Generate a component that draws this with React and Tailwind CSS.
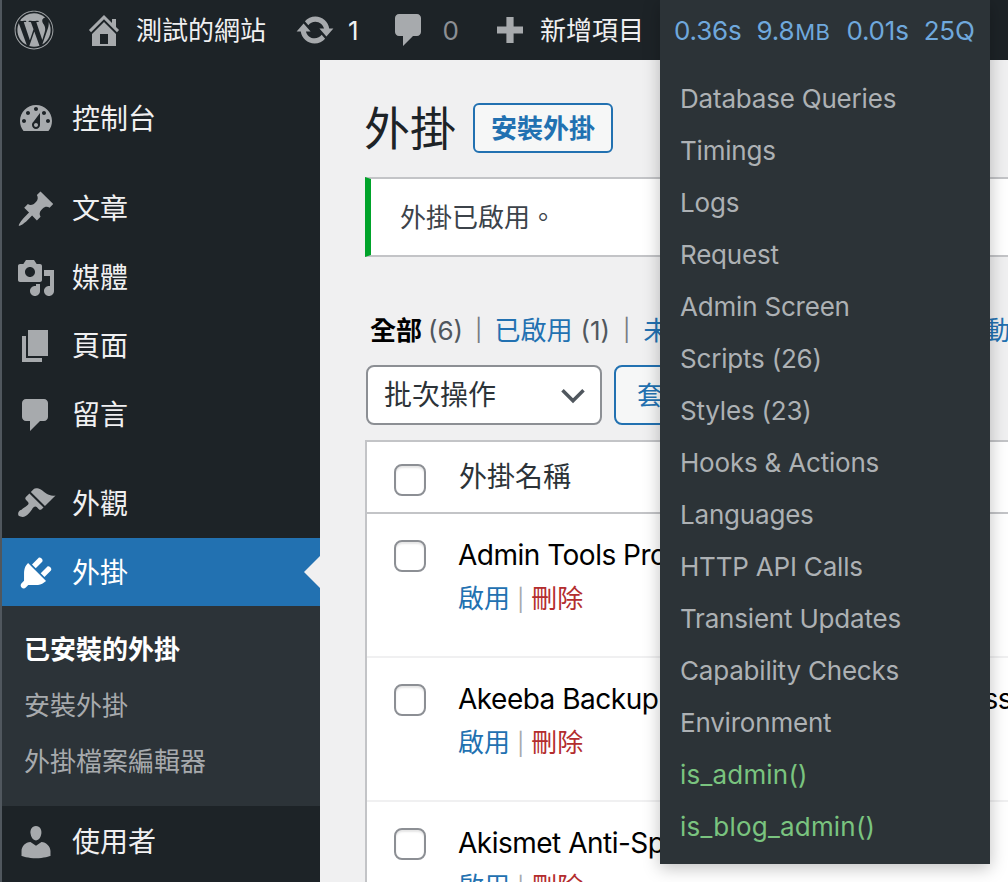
import { FaWordpress } from "react-icons/fa";

const SANS = "font-['Inter','Noto_Sans_CJK_TC',sans-serif]";

const ICONS = {
  dashboard:
    "M3.76 16h12.48c1.1-1.37 1.76-3.11 1.76-5 0-4.42-3.58-8-8-8s-8 3.58-8 8c0 1.89.66 3.63 1.76 5zM10 4c.55 0 1 .45 1 1s-.45 1-1 1-1-.45-1-1 .45-1 1-1zM6 6c.55 0 1 .45 1 1s-.45 1-1 1-1-.45-1-1 .45-1 1-1zm8 0c.55 0 1 .45 1 1s-.45 1-1 1-1-.45-1-1 .45-1 1-1zm-5.37 5.55L12 7v6c0 1.1-.9 2-2 2s-2-.9-2-2c0-.57.24-1.08.63-1.45zM4 10c.55 0 1 .45 1 1s-.45 1-1 1-1-.45-1-1 .45-1 1-1zm12 0c.55 0 1 .45 1 1s-.45 1-1 1-1-.45-1-1 .45-1 1-1zm-5 3c0-.55-.45-1-1-1s-1 .45-1 1 .45 1 1 1 1-.45 1-1z",
  post: "M10.44 3.02l1.82-1.82 6.36 6.35-1.83 1.82c-1.05-.68-2.48-.57-3.41.36l-.75.75c-.92.93-1.04 2.35-.35 3.41l-1.83 1.82-2.41-2.41-2.8 2.79c-.42.42-3.38 2.71-3.8 2.29s1.86-3.39 2.28-3.81l2.79-2.79L4.1 9.36l1.83-1.82c1.05.69 2.48.57 3.4-.36l.75-.75c.93-.92 1.05-2.35.36-3.41z",
  media:
    "M13 11V4c0-.55-.45-1-1-1h-1.67L9 1H5L3.67 3H2c-.55 0-1 .45-1 1v7c0 .55.45 1 1 1h10c.55 0 1-.45 1-1zM7 4.5c1.38 0 2.5 1.12 2.5 2.5S8.38 9.5 7 9.5 4.5 8.38 4.5 7 5.62 4.5 7 4.5zM14 6h5v10.5c0 1.38-1.12 2.5-2.5 2.5S14 17.88 14 16.5s1.12-2.5 2.5-2.5c.17 0 .34.02.5.05V9h-3V6zm-4 8.05V13h2v3.5c0 1.38-1.12 2.5-2.5 2.5S7 17.88 7 16.5 8.12 14 9.5 14c.17 0 .34.02.5.05z",
  page: "M6 15V2h10v13H6zm-1 1h8v2H3V5h2v11z",
  comment:
    "M5 2h9c1.1 0 2 .9 2 2v7c0 1.1-.9 2-2 2h-2l-5 5v-5H5c-1.1 0-2-.9-2-2V4c0-1.1.9-2 2-2z",
  appearance:
    "M14.48 11.06L7.41 3.99l1.5-1.5c.5-.56 2.3-.47 3.51.32 1.21.8 1.43 1.28 2.91 2.1 1.18.64 2.45 1.26 4.45.85zm-.71.71L6.7 4.7 4.93 6.47c-.39.39-.39 1.02 0 1.41l1.06 1.06c.39.39.39 1.03 0 1.42-.6.6-1.43 1.11-2.21 1.69-.35.26-.7.53-1.01.84C1.43 13.23.76 14.56 1.2 15.6c.05.1.12.18.18.26.06.06.11.1.18.15.21.16.52.19.69.26 1.44.61 2.77-.13 4.12-1.52.31-.3.6-.65.86-1 .6-.8 1.1-1.61 1.71-2.21.39-.4 1.03-.4 1.42-.01l1.05 1.05c.39.4 1.02.4 1.41.01z",
  plugins:
    "M13.11 4.36L9.87 7.6 8 5.73l3.24-3.24c.35-.34 1.05-.2 1.56.32.52.51.66 1.21.31 1.55zm-8 1.77l.91-1.12 9.01 9.01-1.19.84c-.71.71-2.63 1.16-3.82 1.16H6.14L4.9 17.26c-.59.59-1.54.59-2.12 0-.59-.58-.59-1.53 0-2.12l1.24-1.24v-3.88c0-1.13.4-3.19 1.09-3.89zm7.26 3.97l3.24-3.24c.34-.35 1.04-.21 1.55.31.52.51.66 1.21.31 1.55l-3.24 3.25z",
  users:
    "M10 9.25c-2.27 0-2.73-3.44-2.73-3.44C7 4.02 7.82 2 9.97 2c2.16 0 2.98 2.02 2.71 3.81 0 0-.41 3.44-2.68 3.44zm0 2.57L12.72 10c2.39 0 4.52 2.33 4.52 4.53v2.49s-3.65 1.13-7.24 1.13c-3.65 0-7.24-1.13-7.24-1.13v-2.49c0-2.25 1.94-4.48 4.47-4.48z",
  home: "M16 8.5l1.53 1.53-1.06 1.06L10 4.62l-6.47 6.47-1.06-1.06L10 2.5l4 4v-2h2v4zm-6-2.46l6 5.99V18H4v-5.97zM12 17v-5H8v5h4z",
  update:
    "M10.2 3.28c3.53 0 6.43 2.61 6.92 6h2.08l-3.5 4-3.5-4h2.32c-.45-1.97-2.21-3.45-4.32-3.45-1.45 0-2.73.71-3.54 1.78L4.95 5.66C6.23 4.2 8.11 3.28 10.2 3.28zm-.4 13.44c-3.52 0-6.43-2.61-6.92-6H.8l3.5-4c1.17 1.33 2.33 2.67 3.5 4H5.48c.45 1.97 2.21 3.45 4.32 3.45 1.45 0 2.73-.71 3.54-1.78l1.71 1.95c-1.28 1.46-3.15 2.38-5.25 2.38z",
  plus: "M16.5 8.2v3.6h-4.7v4.7H8.2v-4.7H3.5V8.2h4.7V3.5h3.6v4.7z",
};

const QM_ITEMS = [
  "Database Queries",
  "Timings",
  "Logs",
  "Request",
  "Admin Screen",
  "Scripts (26)",
  "Styles (23)",
  "Hooks & Actions",
  "Languages",
  "HTTP API Calls",
  "Transient Updates",
  "Capability Checks",
  "Environment",
];

const PLUGINS = ["Admin Tools Pro", "Akeeba Backup Professional for WordPress", "Akismet Anti-Spam"];

function Dashicon({ name, className }) {
  return (
    <svg viewBox="0 0 20 20" fill="currentColor" fillRule="evenodd" className={className}>
      <path d={ICONS[name]} />
    </svg>
  );
}

function MenuItem({ icon, label, active }) {
  return (
    <div
      className={`relative flex items-center h-[68.7px] pt-[2px] ${active ? "bg-[#2271b1] text-white" : "text-[#f0f0f1]"}`}
    >
      <div className={`w-[70px] flex justify-center ${active ? "text-white" : "text-[#a7aaad]"}`}>
        <Dashicon name={icon} className="w-10 h-10 -ml-[2px]" />
      </div>
      <span className="text-[28px] leading-none">{label}</span>
      {active && (
        <div className="absolute right-0 top-[18px] w-0 h-0 border-y-[16px] border-y-transparent border-r-[16px] border-r-[#f0f0f1]" />
      )}
    </div>
  );
}

function TopBar() {
  return (
    <div className="h-[60px] shrink-0 bg-[#1d2327] flex items-center text-[26px] text-[#f0f0f1]">
      <FaWordpress className="w-10 h-10 ml-3 text-[#a7aaad]" />
      <Dashicon name="home" className="w-10 h-10 ml-[30px] text-[#a7aaad]" />
      <span className="ml-3">測試的網站</span>
      <Dashicon name="update" className="w-10 h-10 ml-[29px] text-[#a7aaad]" />
      <span className="ml-[13px]">1</span>
      <Dashicon name="comment" className="w-10 h-10 ml-[30px] text-[#a7aaad]" />
      <span className="ml-[14px] text-[#8c8f94]">0</span>
      <Dashicon name="plus" className="w-10 h-10 ml-[31px] text-[#a7aaad]" />
      <span className="ml-[10px]">新增項目</span>
    </div>
  );
}

function Sidebar() {
  return (
    <div className="w-[318px] shrink-0 bg-[#1d2327] flex flex-col pt-6">
      <MenuItem icon="dashboard" label="控制台" />
      <div className="h-[21px] shrink-0" />
      <MenuItem icon="post" label="文章" />
      <MenuItem icon="media" label="媒體" />
      <MenuItem icon="page" label="頁面" />
      <MenuItem icon="comment" label="留言" />
      <div className="h-[20.5px] shrink-0" />
      <MenuItem icon="appearance" label="外觀" />
      <MenuItem icon="plugins" label="外掛" active />
      <div className="bg-[#2c3338] h-[200px] shrink-0 pt-[28px] pl-[22px] flex flex-col text-[26px] text-[#a7aaad] gap-[24px] leading-[32px]">
        <span className="font-semibold text-white">已安裝的外掛</span>
        <span>安裝外掛</span>
        <span>外掛檔案編輯器</span>
      </div>
      <MenuItem icon="users" label="使用者" />
    </div>
  );
}

function Checkbox({ className }) {
  return (
    <div
      className={`w-8 h-8 rounded-lg border-2 border-[#8c8f94] bg-white shadow-[inset_0_2px_2px_rgba(0,0,0,0.1)] shrink-0 ${className}`}
    />
  );
}

function PluginRow({ name }) {
  return (
    <div className="h-[144px] shrink-0 bg-white border-b-2 border-[#f0f0f1] flex pl-[27px] pt-[23px]">
      <Checkbox className="mt-[3px]" />
      <div className="ml-8 flex flex-col">
        <span className="text-[28px] leading-[36px] text-black whitespace-nowrap tracking-[-0.5px]">{name}</span>
        <div className="mt-2 text-[26px] leading-[36px] whitespace-nowrap">
          <span className="text-[#2271b1]">啟用</span>
          <span className="text-[#a7aaad] text-[22px] mx-[7px]">|</span>
          <span className="text-[#b32d2e]">刪除</span>
        </div>
      </div>
    </div>
  );
}

function Content() {
  return (
    <div className="flex-1 min-w-0 bg-[#f0f0f1] pl-[45px] overflow-hidden flex flex-col">
      <div className="flex items-center mt-[43px] h-[50px] shrink-0">
        <h1 className="text-[46px] leading-none text-[#1d2327] -ml-px">外掛</h1>
        <div className="ml-[17px] w-[140px] h-[50px] flex items-center justify-center rounded-md border-2 border-[#2271b1] bg-[#f6f7f7] text-[26px] font-semibold text-[#2271b1]">
          安裝外掛
        </div>
      </div>
      <div className="mt-6 h-[80px] shrink-0 bg-white border-y-2 border-[#c3c4c7] border-l-[6px] border-l-[#00a32a] flex items-center pl-[29px] text-[26px] text-[#3c434a]">
        外掛已啟用。
      </div>
      <div className="mt-[55px] h-9 shrink-0 flex items-center pl-[5px] text-[26px] text-[#50575e] whitespace-nowrap">
        <span className="font-semibold text-black">全部</span>
        <span className="ml-[6px]">(6)</span>
        <span className="mx-[12px] text-[22px] text-[#787c82]">|</span>
        <span className="text-[#2271b1]">已啟用</span>
        <span className="ml-2">(1)</span>
        <span className="mx-[13px] text-[22px] text-[#787c82]">|</span>
        <span className="text-[#2271b1]">未啟用</span>
        <span className="ml-2">(5)</span>
        <span className="ml-[194px] text-[#2271b1]">自動更新</span>
      </div>
      <div className="mt-[17px] h-[60px] shrink-0 flex items-stretch">
        <div className="ml-px w-[236px] rounded-lg border-2 border-[#8c8f94] bg-white flex items-center justify-between pl-[16px] pr-[13px] text-[28px] text-[#2c3338]">
          批次操作
          <svg viewBox="0 0 24 24" className="w-7 h-7" fill="none" stroke="#50575e" strokeWidth="3">
            <path d="M3 8l9 9 9-9" />
          </svg>
        </div>
        <div className="ml-3 w-[120px] rounded-lg border-2 border-[#2271b1] bg-[#f6f7f7] flex items-center pl-[21px] text-[26px] text-[#2271b1]">
          套用
        </div>
      </div>
      <div className="mt-[15px] border-l-2 border-t-2 border-[#c3c4c7] flex flex-col">
        <div className="h-[72px] shrink-0 bg-white border-b-2 border-[#c3c4c7] flex items-center pl-[27px]">
          <Checkbox className="mt-[6px]" />
          <span className="ml-[33px] text-[28px] text-[#2c3338]">外掛名稱</span>
        </div>
        {PLUGINS.map((name) => (
          <PluginRow key={name} name={name} />
        ))}
      </div>
    </div>
  );
}

// Query Monitor dropdown, hangs over the page from the admin bar
function QueryMonitor() {
  return (
    <div className="absolute left-[658px] top-0 w-[330px] h-[864px] bg-[#2c3337] shadow-[0_4px_16px_rgba(0,0,0,0.25)] text-[26px] tracking-[-0.2px]">
      <div className="h-[60px] flex items-center pl-[14px] text-[#6fa8dc]">
        <span>0.36s</span>
        <span className="ml-[15px]">
          9.8<span className="text-[22px] ml-px tracking-[0.4px]">MB</span>
        </span>
        <span className="ml-[16px]">0.01s</span>
        <span className="ml-[15px]">25Q</span>
      </div>
      <div className="pt-[12px] pl-[20px] flex flex-col">
        {QM_ITEMS.map((item) => (
          <div key={item} className="h-[52px] flex items-center text-[#adb1b4]">
            {item}
          </div>
        ))}
        <div className="h-[52px] flex items-center text-[#7ac47f] tracking-[0.2px]">is_admin()</div>
        <div className="h-[52px] flex items-center text-[#7ac47f] tracking-[0.2px]">is_blog_admin()</div>
      </div>
    </div>
  );
}

export default function App() {
  return (
    <div className={`relative w-[1008px] h-[882px] overflow-hidden flex flex-col border-l-2 border-[#50575e] ${SANS}`}>
      <TopBar />
      <div className="flex flex-1 min-h-0">
        <Sidebar />
        <Content />
      </div>
      <QueryMonitor />
    </div>
  );
}
